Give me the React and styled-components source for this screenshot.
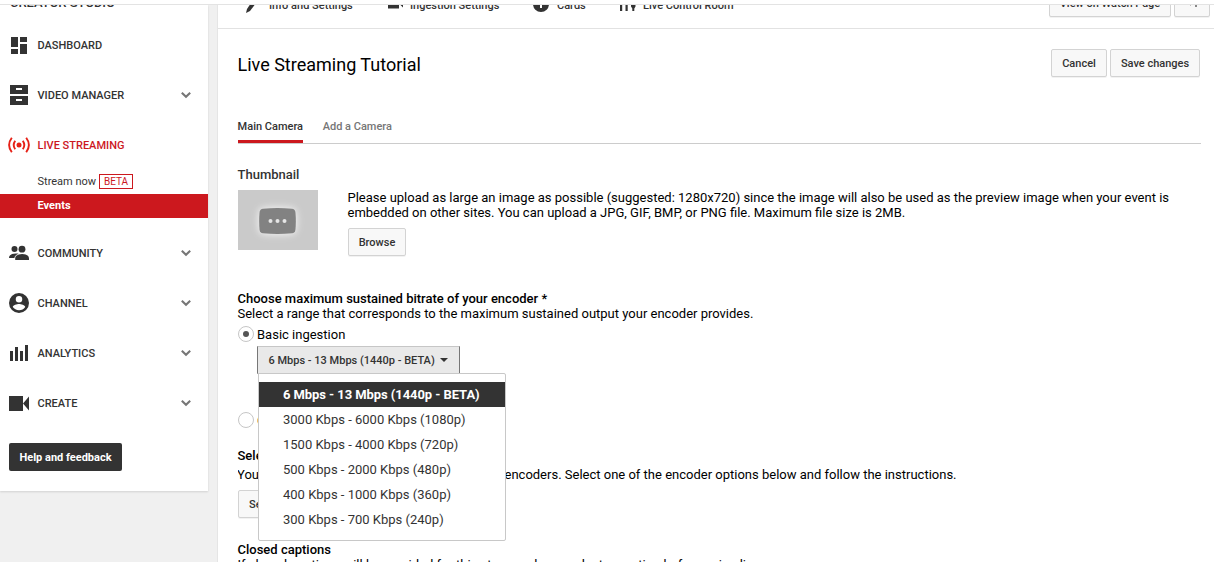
import React from 'react';
import styled, { createGlobalStyle } from 'styled-components';

const Global = createGlobalStyle`
  * { box-sizing: border-box; }
  body { margin: 0; background: #f0f0f0; font-family: Roboto, "Liberation Sans", sans-serif; font-size: 13px; color: #000; overflow: hidden; }
`;

const Page = styled.div`height: 562px; overflow: hidden; display: flex; flex-direction: column;`;
const Masthead = styled.div`height: 5px; flex: none; background: #fff; border-bottom: 1px solid #e3e3e3;`;
const Body = styled.div`flex: 1; display: flex; min-height: 0; overflow: hidden;`;

const Sidebar = styled.aside`
  width: 208px; height: 486px; flex: none; background: #fff; overflow: hidden;
  box-shadow: 0 1px 2px rgba(0, 0, 0, 0.13);
`;
const StudioTitle = styled.div`
  height: 15px; padding-left: 10px; color: #333; font-size: 13px; font-weight: 500;
  line-height: 16px; overflow: hidden; letter-spacing: -0.03px;
  span { display: block; margin-top: -10px; }
`;
const NavRow = styled.div`
  height: 50px; display: flex; align-items: center; padding: 0 16px 0 8px;
  color: ${p => (p.$active ? '#cc181e' : '#333')};
`;
const NavIcon = styled.div`width: 29.5px; display: flex; svg { display: block; }`;
const NavLabel = styled.span`flex: 1; font-size: 11px; font-weight: 500; white-space: nowrap;`;
const SubRow = styled.div`
  height: 24px; display: flex; align-items: center; padding-left: 37.5px;
  font-size: 11px; color: ${p => (p.$selected ? '#fff' : '#333')};
  background: ${p => (p.$selected ? '#cc181e' : 'transparent')};
  font-weight: ${p => (p.$selected ? 700 : 400)};
  padding-bottom: ${p => (p.$selected ? 1 : 2)}px;
  margin-bottom: ${p => (p.$selected ? 10 : 0)}px;
`;
const Beta = styled.span`
  margin-left: 3px; width: 34px; height: 15px; border: 1px solid #cc181e; color: #cc181e;
  font-size: 10px; line-height: 13px; text-align: center;
`;
const HelpButton = styled.button`
  display: block; margin: 15px 0 0 9px; width: 113px; height: 28px; padding: 0; border: 0; border-radius: 2px;
  background: #333; color: #fff; font: 700 11px Roboto, sans-serif;
`;

const Main = styled.main`flex: 1; margin-left: 9px; background: #fff; border-left: 1px solid #e5e5e5; overflow: hidden;`;
const Toolbar = styled.div`height: 24px; border-bottom: 1px solid #e2e2e2; overflow: hidden;`;
const ToolbarRow = styled.div`height: 28px; margin-top: -16px; padding: 0 4px 0 27px; display: flex; align-items: center;`;
const ToolLink = styled.div`
  display: flex; align-items: center; width: ${p => p.$w}px; padding-top: 4px; font-size: 11px; font-weight: 500; color: #333;
  white-space: nowrap; letter-spacing: ${p => p.$ls || 0}px;
`;
const ToolIcon = styled.span`width: ${p => p.$w}px; display: flex; flex: none;`;
const Spacer = styled.div`flex: 1;`;
const Button = styled.button`
  height: 28px; width: ${p => (p.$w ? `${p.$w}px` : 'auto')}; padding: 0 ${p => (p.$w ? 0 : 10)}px; flex: none;
  display: flex; align-items: center; justify-content: center;
  border: 1px solid #d3d3d3; border-radius: 2px; background: #f8f8f8; color: #333;
  box-shadow: 0 1px 0 rgba(0, 0, 0, 0.05); font: 500 11px Roboto, sans-serif;
  white-space: nowrap;
  & + & { margin-left: 3px; }
`;

const Content = styled.div`width: 963px; margin-left: 20px;`;
const TitleRow = styled.div`display: flex; align-items: center; height: 28px; margin-top: 20px; padding-right: 1px;`;
const Title = styled.h1`flex: 1; margin: 3px 0 0; font-size: 18px; font-weight: 400; text-indent: -0.5px;`;
const Tabs = styled.div`display: flex; gap: 20px; height: 27px; margin-top: 40px; border-bottom: 1px solid #ccc;`;
const Tab = styled.div`
  height: 26px; font-size: 11px; line-height: 20px; font-weight: 500; white-space: nowrap; text-indent: -0.4px;
  color: ${p => (p.$active ? '#333' : '#767676')};
  border-bottom: ${p => (p.$active ? '3px solid #cc181e' : '0')};
`;
const Line = styled.div`
  height: ${p => p.$h || 15}px; line-height: ${p => p.$h || 15}px; margin-top: ${p => p.$mt || 0}px;
  font-weight: ${p => (p.$strong ? 500 : 400)}; color: ${p => p.$color || '#000'};
  white-space: nowrap; text-indent: -0.5px;
`;
const Upload = styled.div`display: flex; gap: 30px; margin-top: 8px; height: 66px;`;
const Thumb = styled.div`
  width: 80px; height: 60px; display: flex; align-items: center; justify-content: center; background: #cacaca;
  svg { margin: 2px 1px 0 0; filter: drop-shadow(0 0 3px rgba(255, 255, 255, 0.6)) drop-shadow(0 0 5px rgba(255, 255, 255, 0.4)); }
`;
const RadioRow = styled.div`display: flex; align-items: center; gap: 3px; height: 16px; margin-top: ${p => p.$mt}px;`;
const Radio = styled.span`
  width: 16px; height: 16px; border: 1px solid #c6c6c6; border-radius: 50%; display: flex; align-items: center; justify-content: center;
  &::after { content: ''; width: 6.500px; height: 6.500px; border-radius: 50%; background: ${p => (p.$on ? '#555' : 'transparent')}; }
`;
const Picker = styled.div`position: relative; margin: 4px 0 0 19px; width: 203px; height: 28px;`;
const PickerButton = styled.div`
  height: 28px; display: flex; align-items: center; gap: 5px; padding-left: 10.500px;
  border: 1px solid #c6c6c6; border-left-color: #777; border-right-color: #777; background: #e9e9e9; color: #333;
  font-size: 11px; font-weight: 500; white-space: nowrap;
`;
const Caret = styled.span`border: 4px solid transparent; border-top: 4px solid #333; border-bottom: 0;`;
const Menu = styled.div`
  position: absolute; left: 1px; top: 27px; width: 248px; height: 168px; padding-top: 8px; z-index: 2;
  background: #fff; border: 1px solid #c8c8c8; border-radius: 0 2px 2px 2px;
`;
const Option = styled.div`
  height: 25px; line-height: 25px; padding-left: 24px; white-space: nowrap;
  color: ${p => (p.$selected ? '#fff' : '#333')}; background: ${p => (p.$selected ? '#333' : 'transparent')};
  font-weight: ${p => (p.$selected ? 700 : 400)}; letter-spacing: ${p => (p.$selected ? -0.07 : 0)}px;
`;
const Lead = styled.span`display: inline-block; vertical-align: top; width: 267px; overflow: hidden; height: 15px;`;

const Svg = ({ w, h, box, children }) => (
  <svg width={w} height={h} viewBox={box || `0 0 ${w} ${h}`} fill="currentColor">{children}</svg>
);
const icons = {
  dashboard: <Svg w={20} h={17}><path d="M3 0h7v10H3zM12 0h7v5h-7zM3 12h7v5H3zM12 7h7v10h-7z" /></Svg>,
  video: <Svg w={20} h={20}><path fillRule="evenodd" d="M2 0h18v9H2zM8 3v2h6V3zM2 11h18v9H2zM8 14v2h6v-2z" /></Svg>,
  live: <Svg w={22} h={16}><g fill="#e62117" stroke="#e62117"><circle cx="11" cy="8" r="2.5" stroke="none" /><path d="M7.2 3.700Q4.200 8 7.200 12.300M14.800 3.700Q17.800 8 14.800 12.300M3.800.8Q-1.600 8 3.800 15.200M18.200.8Q23.600 8 18.200 15.200" fill="none" strokeWidth="1.9" /></g></Svg>,
  community: <Svg w={22} h={16}><circle cx="6.500" cy="4" r="3" /><circle cx="14" cy="4.200" r="3.400" /><path d="M1 13c0-3 3-4.500 7-4.500 1 0 2 .1 2.500.3C8 9.800 6.600 11 6.400 13zM7.200 15v-1.500c0-2.800 3-4.500 7-4.500s6.800 1.700 6.800 4.500V15z" /></Svg>,
  channel: <Svg w={22} h={20}><path fillRule="evenodd" d="M11 0a10 10 0 100 20 10 10 0 000-20zm0 3a3.200 3.200 0 110 6.500A3.200 3.200 0 0111 3zm0 14.200c-2.600 0-4.900-1.200-6.200-3.200.1-2 4.200-3 6.200-3s6.100 1 6.200 3a7.400 7.400 0 01-6.200 3.200z" /></Svg>,
  analytics: <Svg w={21} h={16}><path d="M2 6h3v10H2zM7 2h3v14H7zM12 6h3v10h-3zM17 0h3v16h-3z" /></Svg>,
  create: <Svg w={22} h={15}><path d="M1 0h14v15H1zM15 7.500L21 .5v14z" /></Svg>,
};
const Chevron = () => (
  <svg width="12" height="8" viewBox="0 0 12 8"><path d="M1.800 1.800L6 5.800l4.200-4" fill="none" stroke="#767676" strokeWidth="2.100" /></svg>
);
const NavItem = ({ icon, children, active, expand }) => (
  <NavRow $active={active}>
    <NavIcon>{icons[icon]}</NavIcon>
    <NavLabel>{children}</NavLabel>
    {expand && <Chevron />}
  </NavRow>
);

export default function App() {
  return (
    <Page>
      <Global />
      <Masthead />
      <Body>
        <Sidebar>
          <StudioTitle><span>CREATOR STUDIO</span></StudioTitle>
          <NavItem icon="dashboard">DASHBOARD</NavItem>
          <NavItem icon="video" expand>VIDEO MANAGER</NavItem>
          <NavItem icon="live" active>LIVE STREAMING</NavItem>
          <SubRow>Stream now<Beta>BETA</Beta></SubRow>
          <SubRow $selected>Events</SubRow>
          <NavItem icon="community" expand>COMMUNITY</NavItem>
          <NavItem icon="channel" expand>CHANNEL</NavItem>
          <NavItem icon="analytics" expand>ANALYTICS</NavItem>
          <NavItem icon="create" expand>CREATE</NavItem>
          <HelpButton>Help and feedback</HelpButton>
        </Sidebar>
        <Main>
          <Toolbar>
            <ToolbarRow>
              <ToolLink $w={143}>
                <ToolIcon $w={24}><Svg w={12} h={15}><path d="M1 15l1-4L8 2l3.500 2.500L5 13z" /></Svg></ToolIcon>Info and Settings
              </ToolLink>
              <ToolLink $w={145}>
                <ToolIcon $w={22}><Svg w={16} h={8}><path d="M0 0h11v7.500H0zM12 3.500l3-3v6z" /></Svg></ToolIcon>Ingestion Settings
              </ToolLink>
              <ToolLink $w={86.5}>
                <ToolIcon $w={24}><Svg w={16} h={14}><path fillRule="evenodd" d="M8-2a8 8 0 100 16A8 8 0 008-2zM7 3h2v7H7z" /></Svg></ToolIcon>Cards
              </ToolLink>
              <ToolLink $w={120}>
                <ToolIcon $w={23.5}><Svg w={16} h={12}><path d="M0 0h2.200v12H0zM5.500 0h2.200v12H5.500zM11 0h4.500v7.500l-1.200 2V12h-2V9.500L11 7.500z" /></Svg></ToolIcon>Live Control Room
              </ToolLink>
              <Spacer />
              <Button $w={122}>View on Watch Page</Button>
              <Button $w={36}><Svg w={12} h={11}><path d="M2 5l3-3v6zM9 1h2v8H9z" fill="#888" /></Svg></Button>
            </ToolbarRow>
          </Toolbar>
          <Content>
            <TitleRow>
              <Title>Live Streaming Tutorial</Title>
              <Button $w={56}>Cancel</Button>
              <Button $w={90}>Save changes</Button>
            </TitleRow>
            <Tabs><Tab $active>Main Camera</Tab><Tab>Add a Camera</Tab></Tabs>
            <Line $mt={23} $strong $color="#333">Thumbnail</Line>
            <Upload>
              <Thumb>
                <Svg w={37} h={26}><path d="M4 .8Q18.500-.6 33 .8q3 .3 3.400 3.200.9 9 0 18-.4 2.900-3.400 3.200-14.500 1.400-29 0Q1 24.900.6 22q-.9-9 0-18Q1 1.100 4 .8z" fill="#828282" /><g fill="#e6e6e6"><circle cx="11.500" cy="13" r="2" /><circle cx="18.500" cy="13" r="2" /><circle cx="25.500" cy="13" r="2" /></g></Svg>
              </Thumb>
              <div>
                <Line>Please upload as large an image as possible (suggested: 1280x720) since the image will also be used as the preview image when your event is</Line>
                <Line>embedded on other sites. You can upload a JPG, GIF, BMP, or PNG file. Maximum file size is 2MB.</Line>
                <Line $h={8} />
                <Button $w={58}>Browse</Button>
              </div>
            </Upload>
            <Line $mt={35} $strong>Choose maximum sustained bitrate of your encoder *</Line>
            <Line>Select a range that corresponds to the maximum sustained output your encoder provides.</Line>
            <RadioRow $mt={5}><Radio $on />Basic ingestion</RadioRow>
            <Picker>
              <PickerButton>6 Mbps - 13 Mbps (1440p - BETA)<Caret /></PickerButton>
              <Menu>
                <Option $selected>6 Mbps - 13 Mbps (1440p - BETA)</Option>
                <Option>3000 Kbps - 6000 Kbps (1080p)</Option>
                <Option>1500 Kbps - 4000 Kbps (720p)</Option>
                <Option>500 Kbps - 2000 Kbps (480p)</Option>
                <Option>400 Kbps - 1000 Kbps (360p)</Option>
                <Option>300 Kbps - 700 Kbps (240p)</Option>
              </Menu>
            </Picker>
            <RadioRow $mt={38}><Radio />Custom ingestion</RadioRow>
            <Line $mt={20} $strong>Select your encoder</Line>
            <Line $mt={4}><Lead>You can choose from several kinds of</Lead>encoders. Select one of the encoder options below and follow the instructions.</Line>
            <Line $h={8} />
            <Button>Select your encoder</Button>
            <Line $mt={24} $strong>Closed captions</Line>
            <Line>If closed captions will be provided for this stream, please select an option before going live.</Line>
          </Content>
        </Main>
      </Body>
    </Page>
  );
}
